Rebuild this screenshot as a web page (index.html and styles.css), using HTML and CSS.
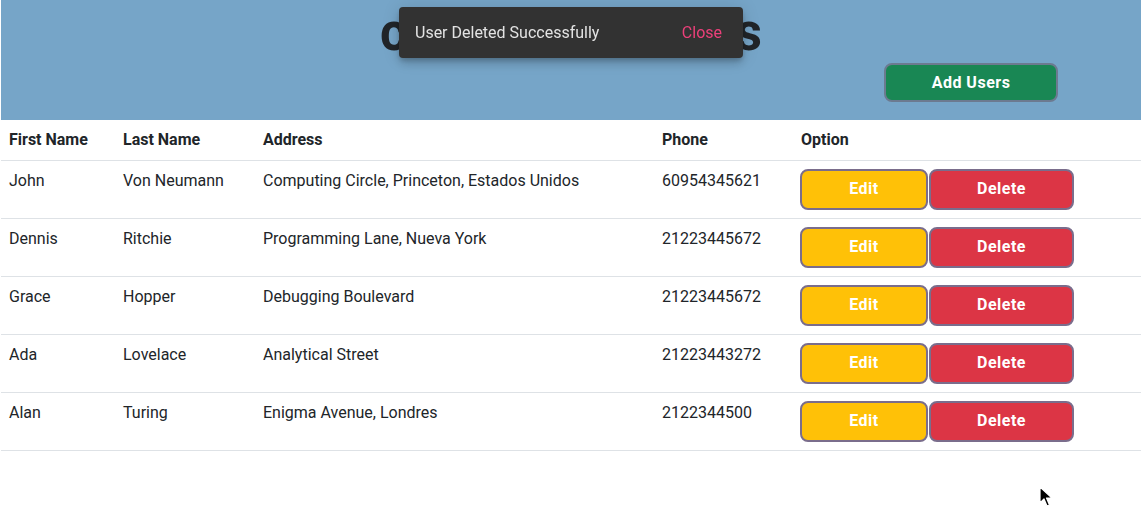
FILE: index.html
```html
<!DOCTYPE html>
<html lang="en">
<head>
<meta charset="utf-8">
<title>Users</title>
<link rel="stylesheet" href="styles.css">
</head>
<body>
<div class="app">
  <header class="banner">
    <h1 class="title">crud de usuarios</h1>
    <div class="banner-actions">
      <button class="btn btn-add">Add Users</button>
    </div>
  </header>
  <table class="users">
    <thead>
      <tr>
        <th class="c-first">First Name</th>
        <th class="c-last">Last Name</th>
        <th class="c-addr">Address</th>
        <th class="c-phone">Phone</th>
        <th class="c-opt">Option</th>
      </tr>
    </thead>
    <tbody>
      <tr>
        <td>John</td><td>Von Neumann</td><td>Computing Circle, Princeton, Estados Unidos</td><td>60954345621</td>
        <td><div class="opts"><button class="btn btn-edit">Edit</button><button class="btn btn-del">Delete</button></div></td>
      </tr>
      <tr>
        <td>Dennis</td><td>Ritchie</td><td>Programming Lane, Nueva York</td><td>21223445672</td>
        <td><div class="opts"><button class="btn btn-edit">Edit</button><button class="btn btn-del">Delete</button></div></td>
      </tr>
      <tr>
        <td>Grace</td><td>Hopper</td><td>Debugging Boulevard</td><td>21223445672</td>
        <td><div class="opts"><button class="btn btn-edit">Edit</button><button class="btn btn-del">Delete</button></div></td>
      </tr>
      <tr>
        <td>Ada</td><td>Lovelace</td><td>Analytical Street</td><td>21223443272</td>
        <td><div class="opts"><button class="btn btn-edit">Edit</button><button class="btn btn-del">Delete</button></div></td>
      </tr>
      <tr>
        <td>Alan</td><td>Turing</td><td>Enigma Avenue, Londres</td><td>2122344500</td>
        <td><div class="opts"><button class="btn btn-edit">Edit</button><button class="btn btn-del">Delete</button></div></td>
      </tr>
    </tbody>
  </table>
</div>

<div class="toast">
  <span class="toast-msg">User Deleted Successfully</span>
  <span class="toast-close">Close</span>
</div>

<svg class="cursor" width="14" height="22" viewBox="0 0 14 22" aria-hidden="true">
  <path d="M1 1 L1 17 L5 13 L8 20 L10.5 19 L7.5 12 L13 12 Z" fill="#000" stroke="#fff" stroke-width="1.2" stroke-linejoin="round"/>
</svg>
</body>
</html>
```

FILE: styles.css
```css
* { box-sizing: border-box; }

html, body {
  margin: 0;
  padding: 0;
  background: #ffffff;
}

body {
  font-family: Roboto, "Liberation Sans", Arial, sans-serif;
  font-size: 16px;
  line-height: 1.5;
  color: #212529;
}

.app {
  width: 1140px;
  margin: 0 0 0 1px;
}

.banner {
  background: #76a5c8;
  height: 120px;
  display: flex;
  flex-direction: column;
}

.title {
  margin: 2px 0 0 0;
  text-align: center;
  font-size: 51px;
  font-weight: 700;
  line-height: 61px;
  color: #212529;
}

.banner-actions {
  display: flex;
  justify-content: flex-end;
  padding-right: 83px;
}

.btn {
  font-family: Roboto, "Liberation Sans", Arial, sans-serif;
  font-size: 16px;
  font-weight: 700;
  letter-spacing: 0.5px;
  color: #ffffff;
  border: 2px solid #7a6d8c;
  border-radius: 8px;
  cursor: pointer;
  padding: 0;
  line-height: 1;
}

.btn-add {
  width: 174px;
  height: 39px;
  background: #198754;
  border-color: #6c7a90;
}

.users {
  width: 1140px;
  border-collapse: collapse;
  table-layout: fixed;
}

.users th,
.users td {
  padding: 8px 8px;
  text-align: left;
  vertical-align: top;
  border-bottom: 1px solid #dee2e6;
}

.users th {
  font-weight: 700;
  vertical-align: bottom;
}

.c-first { width: 114px; }
.c-last { width: 140px; }
.c-addr { width: 399px; }
.c-phone { width: 139px; }
.c-opt { width: 348px; }

.opts {
  display: flex;
  gap: 1px;
  margin-left: -1px;
}

.btn-edit {
  width: 128px;
  height: 41px;
  padding-bottom: 2px;
  background: #ffc107;
}

.btn-del {
  width: 145px;
  height: 41px;
  padding-bottom: 2px;
  background: #dc3545;
}

.toast {
  position: fixed;
  top: 7px;
  left: 399px;
  width: 344px;
  height: 51px;
  background: #323232;
  border-radius: 4px;
  box-shadow: 0 3px 5px -1px rgba(0,0,0,0.2), 0 6px 10px 0 rgba(0,0,0,0.14), 0 1px 18px 0 rgba(0,0,0,0.12);
  display: flex;
  align-items: center;
  justify-content: space-between;
  padding: 0 21px 0 16px;
  font-size: 16px;
  line-height: 20px;
}

.toast-msg {
  color: #e3e3e3;
}

.toast-close {
  color: #ec407a;
}

.cursor {
  position: fixed;
  left: 1039px;
  top: 486px;
}
```
